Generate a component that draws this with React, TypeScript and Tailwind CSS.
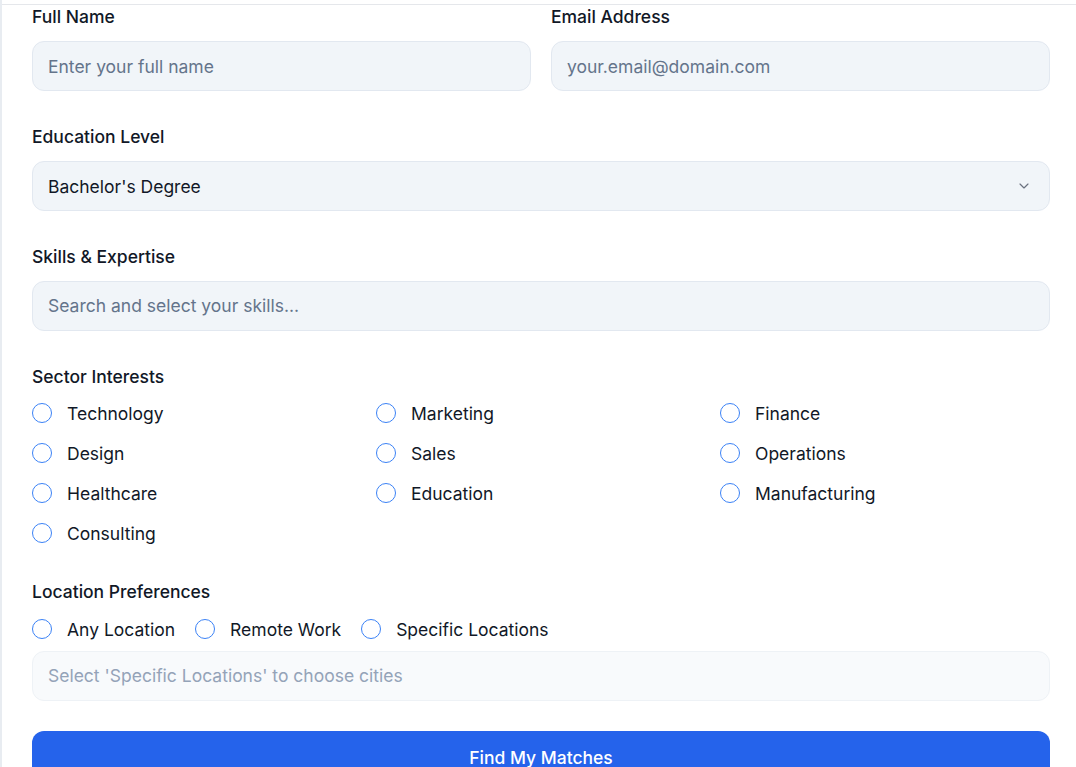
import React from "react";

const Radio = ({ label }: { label: string }) => (
  <label className="flex items-center gap-[15px] h-6">
    <span className="w-5 h-5 rounded-full border-[1.5px] border-[#3b82f6] bg-white shrink-0" />
    <span className="text-[17.5px] leading-6 pt-[2px] text-[#111827]">{label}</span>
  </label>
);

export default function App() {
  const sectors = [
    "Technology",
    "Marketing",
    "Finance",
    "Design",
    "Sales",
    "Operations",
    "Healthcare",
    "Education",
    "Manufacturing",
    "Consulting",
  ];
  return (
    <div
      className="min-h-screen bg-white border-l-2 border-[#e8ecf1] overflow-hidden"
      style={{ fontFamily: "Inter, 'Noto Sans', sans-serif" }}
    >
      <div className="mt-1 border-t border-[#e5e7eb] pl-[30px]">
        <div className="w-[1018px]">
          <div className="grid grid-cols-2 gap-x-5 mb-[34px]">
            <div>
              <div className="text-[17.5px] leading-6 font-medium text-[#111827] mb-3">Full Name</div>
              <div className="h-[50px] rounded-xl bg-[#f1f5f9] border border-[#e2e8f0] flex items-center px-[15px] pt-[3px] text-[17.5px] text-[#64748b]">
                Enter your full name
              </div>
            </div>
            <div>
              <div className="text-[17.5px] leading-6 font-medium text-[#111827] mb-3">Email Address</div>
              <div className="h-[50px] rounded-xl bg-[#f1f5f9] border border-[#e2e8f0] flex items-center px-[15px] pt-[3px] text-[17.5px] text-[#64748b]">
                your.email@domain.com
              </div>
            </div>
          </div>

          <div className="mb-[34px]">
            <div className="text-[17.5px] leading-6 font-medium text-[#111827] mb-3">Education Level</div>
            <div className="h-[50px] rounded-xl bg-[#f1f5f9] border border-[#e2e8f0] flex items-center justify-between px-[15px] text-[17.5px] text-[#111827]">
              <span className="pt-[2px]">Bachelor's Degree</span>
              <svg width="16" height="16" viewBox="0 0 24 24" fill="none" stroke="#6b7280" strokeWidth="1.75" strokeLinecap="round" strokeLinejoin="round" className="mr-[2px]">
                <path d="m6 9 6 6 6-6" />
              </svg>
            </div>
          </div>

          <div className="mb-[34px]">
            <div className="text-[17.5px] leading-6 font-medium text-[#111827] mb-3">Skills &amp; Expertise</div>
            <div className="h-[50px] rounded-xl bg-[#f1f5f9] border border-[#e2e8f0] flex items-center px-[15px] text-[17.5px] text-[#64748b]">
              Search and select your skills...
            </div>
          </div>

          <div className="mb-[35px]">
            <div className="text-[17.5px] leading-6 font-medium text-[#111827] mb-3">Sector Interests</div>
            <div className="grid grid-cols-3 gap-x-[14px] gap-y-4">
              {sectors.map((s) => (
                <Radio key={s} label={s} />
              ))}
            </div>
          </div>

          <div className="mb-[30px]">
            <div className="text-[17.5px] leading-6 font-medium text-[#111827] mb-[13px]">Location Preferences</div>
            <div className="flex items-center gap-5 mb-[10px]">
              <Radio label="Any Location" />
              <Radio label="Remote Work" />
              <Radio label="Specific Locations" />
            </div>
            <div className="h-[50px] rounded-xl bg-[#f8fafc] border border-[#eef2f6] flex items-center px-[15px] text-[17.5px] text-[#94a3b8]">
              Select 'Specific Locations' to choose cities
            </div>
          </div>

          <button className="w-full h-[54px] rounded-xl bg-[#2563eb] text-white text-[17.5px] font-medium">
            Find My Matches
          </button>
        </div>
      </div>
    </div>
  );
}
